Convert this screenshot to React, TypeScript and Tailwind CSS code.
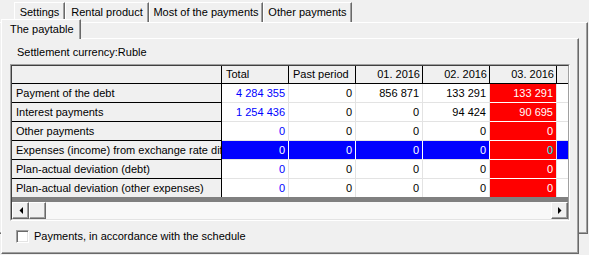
import clsx from 'clsx'

type Row = { label: string; values: string[]; selected?: boolean }

const topTabs = [
  { label: 'Settings', width: 'w-[51px]' },
  { label: 'Rental product', width: 'w-[84px]' },
  { label: 'Most of the payments', width: 'w-[114px]' },
  { label: 'Other payments', width: 'w-[89px]' },
]

const columns = [
  { title: 'Total', left: true },
  { title: 'Past period', left: true },
  { title: '01. 2016', left: false },
  { title: '02. 2016', left: false },
  { title: '03. 2016', left: false },
]

const rows: Row[] = [
  { label: 'Payment of the debt', values: ['4 284 355', '0', '856 871', '133 291', '133 291'] },
  { label: 'Interest payments', values: ['1 254 436', '0', '0', '94 424', '90 695'] },
  { label: 'Other payments', values: ['0', '0', '0', '0', '0'] },
  {
    label: 'Expenses (income) from exchange rate differences',
    values: ['0', '0', '0', '0', '0'],
    selected: true,
  },
  { label: 'Plan-actual deviation (debt)', values: ['0', '0', '0', '0', '0'] },
  { label: 'Plan-actual deviation (other expenses)', values: ['0', '0', '0', '0', '0'] },
]

function ScrollButton({ dir }: { dir: 'left' | 'right' }) {
  return (
    <div className="flex h-[17px] w-[17px] items-center justify-center border border-t-white border-l-white border-r-[#696969] border-b-[#696969] bg-[#f0f0f0] shadow-[inset_-1px_-1px_#a0a0a0]">
      <svg width="4" height="7" viewBox="0 0 4 7">
        {dir === 'left' ? (
          <polygon points="4,0 4,7 0.5,3.5" fill="#000" />
        ) : (
          <polygon points="0,0 0,7 3.5,3.5" fill="#000" />
        )}
      </svg>
    </div>
  )
}

function Grid() {
  return (
    <div className="ml-[8px] mt-[5px] h-[157px] w-[560px] border border-t-[#a0a0a0] border-l-[#a0a0a0] border-r-white border-b-white">
      <div className="flex h-full flex-col border border-t-[#404040] border-l-[#404040] border-r-[#a0a0a0] border-b-[#e3e3e3]">
        {/* header */}
        <div className="flex h-[18px] border-b border-black bg-[#f0f0f0]">
          <div className="w-[210px] border-r border-black" />
          {columns.map((c) => (
            <div
              key={c.title}
              className={clsx(
                'flex w-[67px] items-center border-r border-black whitespace-nowrap',
                c.left ? 'pl-[4px]' : 'justify-end pr-[2px]',
              )}
            >
              {c.title}
            </div>
          ))}
          <div className="flex-1" />
        </div>

        {rows.map((r, i) => {
          const last = i === rows.length - 1
          return (
            <div key={r.label} className={clsx('flex', last ? 'h-[18px]' : 'h-[19px]')}>
              <div
                className={clsx(
                  'flex w-[210px] items-center overflow-hidden whitespace-nowrap border-r border-black bg-[#f0f0f0] pl-[4px]',
                  !last && 'border-b',
                )}
              >
                {r.label}
              </div>
              {r.values.map((v, j) => {
                const red = j === 4
                return (
                  <div
                    key={j}
                    className={clsx(
                      'flex w-[67px] items-center justify-end border-r pr-[3px]',
                      !last && 'border-b',
                      red
                        ? 'border-r-[#e3e3e3] border-b-white bg-[#ff0000]'
                        : r.selected
                          ? 'border-r-white border-b-[#e3e3e3] bg-[#0000ff]'
                          : 'border-[#e3e3e3] bg-white',
                      red && r.selected
                        ? 'text-[#00ffff]'
                        : red || r.selected
                          ? 'text-white'
                          : j === 0
                            ? 'text-[#0000ff]'
                            : 'text-black',
                    )}
                  >
                    {v}
                  </div>
                )
              })}
              <div
                className={clsx(
                  'flex-1 border-[#e3e3e3]',
                  !last && 'border-b',
                  r.selected ? 'bg-[#0000ff]' : 'bg-white',
                )}
              />
            </div>
          )
        })}

        <div className="h-[5px] bg-[#808080]" />

        {/* horizontal scrollbar */}
        <div className="flex h-[17px]">
          <ScrollButton dir="left" />
          <div className="h-[17px] w-[17px] border border-t-white border-l-white border-r-[#696969] border-b-[#696969] bg-[#f0f0f0] shadow-[inset_-1px_-1px_#a0a0a0]" />
          <div className="flex-1 bg-[#f8f8f8]" />
          <ScrollButton dir="right" />
        </div>
      </div>
    </div>
  )
}

export default function App() {
  return (
    <div className="h-[255px] w-[589px] overflow-hidden bg-[#f0f0f0] font-['Liberation_Sans',Arial,sans-serif] text-[11px] leading-[13px] text-black">
      <div className="flex h-[22px] items-end pl-[14px]">
        {topTabs.map((t) => (
          <div
            key={t.label}
            className={clsx(
              'flex h-[20px] items-center justify-center whitespace-nowrap border-t border-l border-r border-t-white border-l-white border-r-[#696969] shadow-[inset_-1px_0_#a0a0a0]',
              t.width,
            )}
          >
            {t.label}
          </div>
        ))}
      </div>

      <div className="h-[212px] w-[588px] border-t border-r border-b border-t-white border-r-[#696969] border-b-[#696969] shadow-[inset_-1px_-1px_#a0a0a0]">
        <div className="relative z-10 -mt-[4px] ml-px w-[578px]">
          <div className="relative z-10 -mb-px flex h-[20px] w-[80px] items-center border-t border-l border-r border-t-white border-l-white border-r-[#696969] bg-[#f0f0f0] pl-[8px] shadow-[inset_-1px_0_#a0a0a0]">
            The paytable
          </div>
          <div className="h-[216px] border border-t-white border-l-white border-r-[#696969] border-b-[#696969] bg-[#f0f0f0] pt-[7px] shadow-[inset_-1px_-1px_#a0a0a0]">
            <div className="pl-[15px]">Settlement currency:Ruble</div>
            <Grid />
            <label className="ml-[14px] mt-[9px] flex items-center">
              <span className="h-[13px] w-[13px] border border-t-[#a0a0a0] border-l-[#a0a0a0] border-r-white border-b-white bg-white shadow-[inset_1px_1px_#696969,inset_-1px_-1px_#e3e3e3]" />
              <span className="ml-[5px]">Payments, in accordance with the schedule</span>
            </label>
          </div>
        </div>
      </div>
    </div>
  )
}
